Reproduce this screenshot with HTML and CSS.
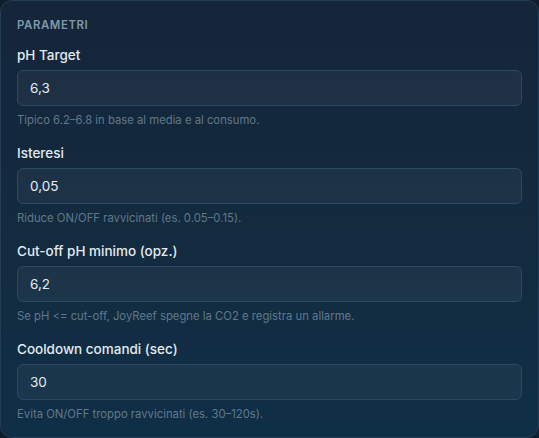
FILE: index.html
```html
<!DOCTYPE html>
<html lang="it">
<head>
<meta charset="utf-8">
<link rel="stylesheet" href="styles.css">
</head>
<body>
<section class="card">
  <h2 class="card-title">PARAMETRI</h2>
  <div class="field">
    <label class="field-label">pH Target</label>
    <div class="field-input">6,3</div>
    <p class="field-hint">Tipico 6.2–6.8 in base al media e al consumo.</p>
  </div>
  <div class="field">
    <label class="field-label">Isteresi</label>
    <div class="field-input">0,05</div>
    <p class="field-hint">Riduce ON/OFF ravvicinati (es. 0.05–0.15).</p>
  </div>
  <div class="field">
    <label class="field-label">Cut-off pH minimo (opz.)</label>
    <div class="field-input">6,2</div>
    <p class="field-hint">Se pH &lt;= cut-off, JoyReef spegne la CO2 e registra un allarme.</p>
  </div>
  <div class="field">
    <label class="field-label">Cooldown comandi (sec)</label>
    <div class="field-input">30</div>
    <p class="field-hint">Evita ON/OFF troppo ravvicinati (es. 30–120s).</p>
  </div>
</section>
</body>
</html>
```
FILE: styles.css
```css
html, body {
  margin: 0;
  padding: 0;
  background: #0f1d2c;
  font-family: Inter, "Noto Sans", sans-serif;
}
.card {
  box-sizing: border-box;
  width: 539px;
  height: 438px;
  border: 1px solid #223d55;
  border-radius: 12px;
  padding: 17px 16px 16px;
  background: linear-gradient(180deg, #15253a 0%, #132b40 60%, #0f2f46 100%);
  display: flex;
  flex-direction: column;
  gap: 17px;
}
.card-title {
  margin: 0 0 -3px;
  font-size: 11.4px;
  line-height: 14px;
  font-weight: 600;
  letter-spacing: 0.6px;
  color: #7f99aa;
}
.field {
  display: flex;
  flex-direction: column;
}
.field-label {
  font-size: 13.5px;
  line-height: 18px;
  font-weight: 500;
  color: #e2eaf0;
  margin-bottom: 6px;
}
.field-input {
  box-sizing: border-box;
  height: 36px;
  border: 1px solid #2a4a62;
  border-radius: 6px;
  background: rgba(255, 255, 255, 0.045);
  padding: 0 12px;
  display: flex;
  align-items: center;
  font-size: 13.5px;
  color: #e4ecf2;
}
.field-hint {
  margin: 7px 0 0;
  font-size: 11.3px;
  line-height: 14px;
  color: #60798b;
}
```
